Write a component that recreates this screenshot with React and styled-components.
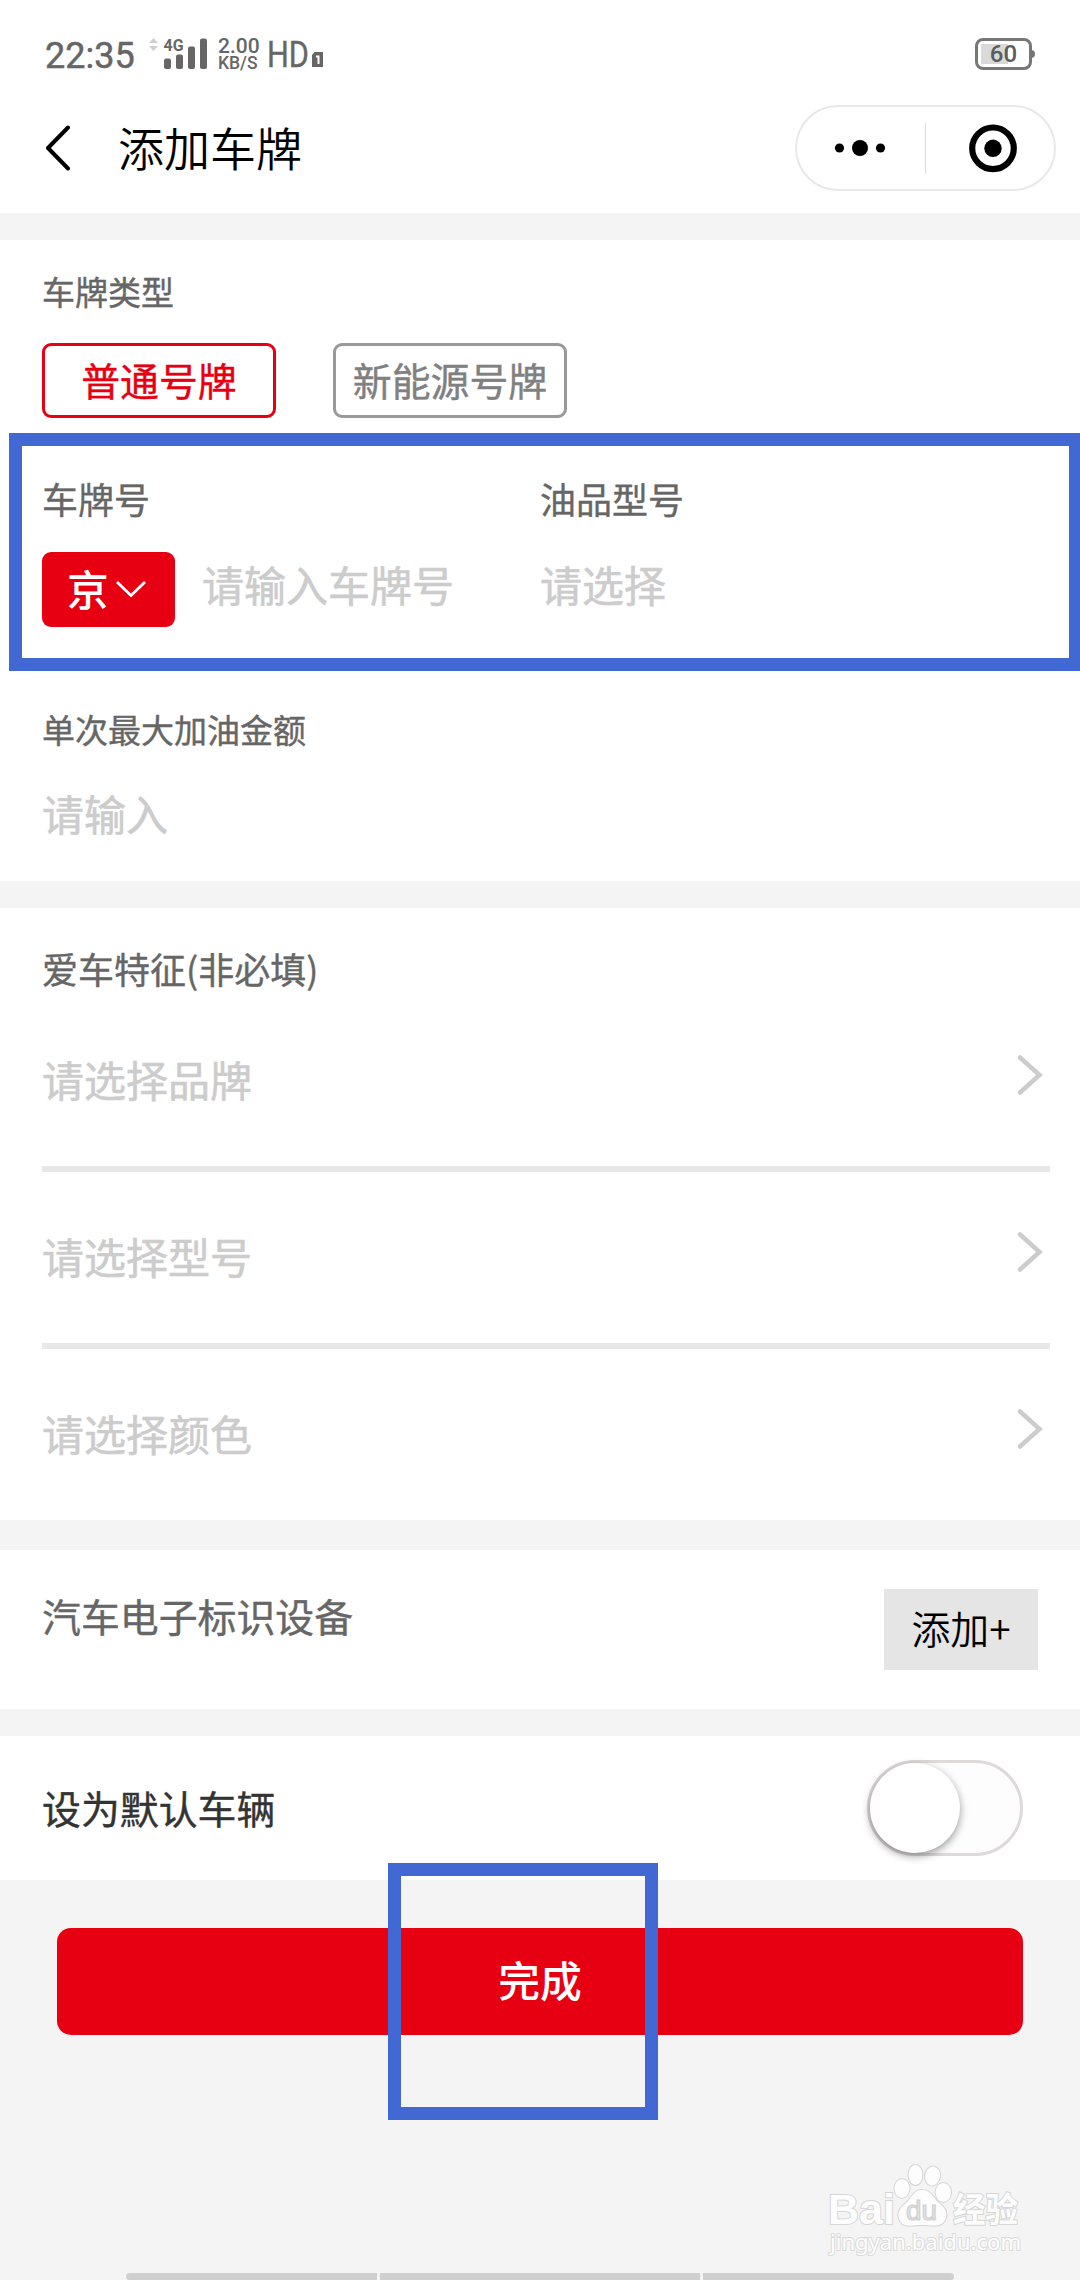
import React, {useState} from 'react';
import styled, {createGlobalStyle} from 'styled-components';

const features = ['请选择品牌', '请选择型号', '请选择颜色'];

function StatusBar() {
  return (
    <Status>
      <Clock>22:35</Clock>
      <Signal width='60' height='34' viewBox='0 0 60 34'>
        <path d='M1 7 L5.5 2 L10 7 Z M1 10 L5.5 15 L10 10 Z' fill='#cfcfcf' />
        <text x='15.5' y='15' textLength='20' lengthAdjust='spacingAndGlyphs'>4G</text>
        <rect x='16' y='22.5' width='7' height='10.5' rx='2' />
        <rect x='28' y='18.5' width='7' height='14.5' rx='2' />
        <rect x='40' y='10.5' width='7' height='22.5' rx='2' />
        <rect x='52' y='2.5' width='7' height='30.5' rx='2' />
      </Signal>
      <Speed>
        <span>2.00</span>
        <small>KB/S</small>
      </Speed>
      <Hd width='58' height='44' viewBox='0 -5 58 44'>
        <text x='0' y='31' textLength='42' lengthAdjust='spacingAndGlyphs'>HD</text>
        <path d='M47.5 16 H56 V31 H45 V19 Z' />
        <path d='M49 20.5 H51.5 V28' stroke='#fff' strokeWidth='2' fill='none' />
      </Hd>
      <Battery>
        <span>60</span>
      </Battery>
    </Status>
  )
}

function Watermark() {
  return (
    <Mark width='200' height='100' viewBox='0 0 200 100'>
      <g className='logo'>
        <text x='6' y='64' fontSize='43' textLength='67' lengthAdjust='spacingAndGlyphs'>Bai</text>
        <ellipse cx='80' cy='28.5' rx='7.5' ry='9.5' />
        <ellipse cx='93.5' cy='15' rx='7' ry='10' />
        <ellipse cx='110.5' cy='16' rx='7.5' ry='9.5' transform='rotate(10 110.5 16)' />
        <ellipse cx='121.3' cy='32.5' rx='7.7' ry='9.5' />
        <path d='M100 30 C109 30 111 38 117 43 C124 48 126 54 123 60 C119 68 110 65 100 65 C90 65 82 68 78 61 C74 53 78 48 84 43 C90 38 91 30 100 30 Z' />
        <text x='131' y='62' className='cn' fontSize='34' textLength='65' lengthAdjust='spacingAndGlyphs'>经验</text>
      </g>
      <text className='du' x='84' y='60' textLength='31' lengthAdjust='spacingAndGlyphs'>du</text>
      <text className='site' x='8' y='90' textLength='191' lengthAdjust='spacingAndGlyphs'>jingyan.baidu.com</text>
    </Mark>
  )
}

function App() {
  const [type, setType] = useState(0);
  const [on, setOn] = useState(false);

  return (
    <>
    <Global />
    <Page>
      <StatusBar />
      <Nav>
        <Back width='26' height='46' viewBox='0 0 26 46'>
          <path d='M23 2.5 L3 23 L23 43.5' />
        </Back>
        <Title>添加车牌</Title>
        <Capsule>
          <svg width='128' height='82' viewBox='0 0 128 82'>
            <circle cx='42.5' cy='41' r='4.6' />
            <circle cx='63' cy='41' r='8' />
            <circle cx='83.5' cy='41' r='4.6' />
          </svg>
          <Split />
          <svg width='128' height='82' viewBox='0 0 128 82'>
            <circle cx='67' cy='41.3' r='20.8' fill='none' stroke='#000' strokeWidth='6.2' />
            <circle cx='67' cy='41.3' r='8.7' />
          </svg>
        </Capsule>
      </Nav>

      <PlateSection>
        <Label size='33px'>车牌类型</Label>
        <Types>
          <TypeButton active={type === 0 ? 1 : 0} onClick={() => setType(0)}>普通号牌</TypeButton>
          <TypeButton active={type === 1 ? 1 : 0} onClick={() => setType(1)}>新能源号牌</TypeButton>
        </Types>
        <Columns>
          <div>
            <Label size='36px'>车牌号</Label>
            <PlateRow>
              <Province>
                京
                <svg width='32' height='18' viewBox='0 0 32 18'>
                  <path d='M2 2 L16 15.5 L30 2' />
                </svg>
              </Province>
              <Hint>请输入车牌号</Hint>
            </PlateRow>
          </div>
          <div>
            <Label size='36px'>油品型号</Label>
            <PlateRow>
              <Hint>请选择</Hint>
            </PlateRow>
          </div>
        </Columns>
        <Label size='33px'>单次最大加油金额</Label>
        <Amount>请输入</Amount>
      </PlateSection>

      <FeatureSection>
        <Label size='36px'>爱车特征(非必填)</Label>
        <div>
          {features.map((f) => (
            <FeatureRow key={f}>
              <Hint>{f}</Hint>
              <svg width='26' height='40' viewBox='0 0 26 40'>
                <path d='M3 2.5 L22.5 20 L3 37.5' />
              </svg>
            </FeatureRow>
          ))}
        </div>
      </FeatureSection>

      <DeviceSection>
        <Label size='38.88px'>汽车电子标识设备</Label>
        <AddButton>添加+</AddButton>
      </DeviceSection>

      <DefaultSection>
        <DefaultText>设为默认车辆</DefaultText>
        <Toggle onClick={() => setOn(!on)} $on={on} />
      </DefaultSection>

      <Submit>完成</Submit>

      <PlateFrame />
      <SubmitFrame />
      <Watermark />
      <HomeBar>
        <i /><i /><i />
      </HomeBar>
    </Page>
    </>
  )
}

export default App

const Global = createGlobalStyle`
body {
    margin: 0;
    background: #f4f4f4;
}
* {
    box-sizing: border-box;
}
button {
    padding: 0;
    border: 0;
    font-family: inherit;
    cursor: pointer;
}
svg {
    display: block;
}
`
const Page = styled.div`
position: relative;
width: 1080px;
height: 2280px;
overflow: hidden;
background: #f4f4f4;
font-family: 'Noto Sans CJK SC', sans-serif;
`
const Status = styled.div`
display: flex;
align-items: flex-start;
height: 90px;
padding: 32px 45px 0;
background: #fff;
color: #666;
font-family: Roboto, sans-serif;
`
const Clock = styled.div`
width: 90px;
font-size: 36px;
-webkit-text-stroke: 0.5px;
line-height: 48px;
`
const Signal = styled.svg`
margin: 4px 0 0 13px;
fill: #666;
font-size: 17px;
font-weight: 700;
`
const Speed = styled.div`
display: flex;
flex-direction: column;
width: 42px;
margin: 7px 0 0 10px;
font-weight: 500;

    span {
        font-size: 21px;
        line-height: 14px;
    }
    small {
        font-size: 17.5px;
        line-height: 20px;
    }
`
const Hd = styled.svg`
margin: -1px 0 0 7px;
fill: #666;
font-size: 36.5px;

    text {
        stroke: #666;
        stroke-width: 0.4;
    }
`
const Battery = styled.div`
position: relative;
width: 57px;
height: 32px;
margin: 6px 3px 0 auto;
border: 3px solid #777;
border-radius: 8px;
background: linear-gradient(#d9d9d9, #d9d9d9) 3px 3px / 27px 20px no-repeat;
color: #5c5c5c;
font-size: 24px;
font-weight: 500;
line-height: 26px;
text-align: center;

    &::after {
        content: '';
        position: absolute;
        right: -6px;
        top: 9px;
        width: 4px;
        height: 8px;
        border-radius: 0 4px 4px 0;
        background: #777;
    }
`
const Nav = styled.div`
display: flex;
align-items: flex-start;
height: 123px;
padding: 15px 24px 0 45px;
background: #fff;
`
const Back = styled.svg`
margin-top: 20px;
fill: none;
stroke: #000;
stroke-width: 4;
stroke-linecap: round;
stroke-linejoin: round;
`
const Title = styled.div`
margin: 13px 0 0 47px;
font-size: 46px;
font-weight: 350;
line-height: 56px;
`
const Capsule = styled.div`
display: flex;
align-items: center;
width: 261px;
height: 86px;
margin-left: auto;
border: 2px solid #e8e8e8;
border-radius: 43px;
`
const Split = styled.div`
width: 1px;
height: 51px;
background: #ddd;
`
const Section = styled.div`
padding: 0 42px;
background: #fff;
`
const Label = styled.div`
color: #666;
font-size: ${({size}) => size};
-webkit-text-stroke: 0.4px;
line-height: 44px;
`
const Hint = styled.div`
color: #ccc;
font-size: 42px;
-webkit-text-stroke: 0.6px;
line-height: 50px;
`
const PlateSection = styled(Section)`
height: 641px;
margin-top: 27px;
padding-top: 29px;
`
const Types = styled.div`
display: flex;
gap: 57px;
margin-top: 30px;
`
const TypeButton = styled.button`
width: 234px;
height: 75px;
border: 3px solid ${({active}) => (active ? '#e60012' : '#999')};
border-radius: 9px;
background: #fff;
color: ${({active}) => (active ? '#e60012' : '#808080')};
font-size: 38.88px;
-webkit-text-stroke: 0.4px;
line-height: 65px;
padding-bottom: 3px;
`
const Columns = styled.div`
display: grid;
grid-template-columns: 498px 1fr;
margin: 58px 0 80px;
`
const PlateRow = styled.div`
display: flex;
align-items: center;
gap: 27px;
height: 75px;
margin-top: 32px;

    ${Hint} {
        margin-bottom: 11px;
    }
`
const Province = styled.button`
display: flex;
align-items: center;
gap: 6px;
width: 133px;
height: 75px;
padding: 0 0 4px 25px;
border-radius: 9px;
background: #e60012;
color: #fff;
font-size: 41.76px;
font-weight: 500;
line-height: 70px;

    svg {
        margin-top: 3px;
        fill: none;
        stroke: #fff;
        stroke-width: 2.8;
    }
`
const Amount = styled(Hint)`
margin-top: 37px;
`
const FeatureSection = styled(Section)`
height: 612px;
margin-top: 27px;
padding: 38px 30px 0 42px;
overflow: hidden;

    > div:last-child {
        margin-top: 5px;
    }
`
const FeatureRow = styled.div`
display: flex;
justify-content: space-between;
height: 177px;
padding: 59px 7px 0 0;
border-bottom: 6px solid #e8e8e8;

    &:last-child {
        border-bottom: 0;
    }

    svg {
        margin-top: 1px;
        fill: none;
        stroke: #ccc;
        stroke-width: 4.5;
        stroke-linecap: round;
    }
`
const DeviceSection = styled(Section)`
display: flex;
justify-content: space-between;
align-items: flex-start;
height: 159px;
margin-top: 30px;
padding-top: 39px;

    ${Label} {
        margin-top: 4px;
    }
`
const AddButton = styled.button`
width: 154px;
height: 81px;
padding-bottom: 4px;
background: #e5e5e5;
color: #000;
font-size: 38.88px;
font-weight: 350;
line-height: 77px;
`
const DefaultSection = styled(Section)`
display: flex;
justify-content: space-between;
align-items: center;
height: 144px;
margin-top: 27px;
padding-right: 57px;
`
const DefaultText = styled.div`
color: #333;
font-size: 38.88px;
-webkit-text-stroke: 0.4px;
line-height: 50px;
margin-bottom: 2px;
`
const Toggle = styled.button`
display: flex;
justify-content: ${({$on}) => ($on ? 'flex-end' : 'flex-start')};
width: 156px;
height: 96px;
border: 3px solid #dfdada;
border-radius: 48px;
background: ${({$on}) => ($on ? '#e60012' : '#fdfdfd')};

    &::before {
        content: '';
        width: 90px;
        height: 90px;
        border-radius: 50%;
        background: #fff;
        box-shadow: 0 3px 9px rgba(0, 0, 0, 0.4);
    }
`
const Submit = styled.button`
display: block;
width: 966px;
height: 107px;
margin: 48px 57px 0;
padding-bottom: 4px;
border-radius: 14px;
background: #e60012;
color: #fff;
font-size: 41.76px;
font-weight: 500;
line-height: 103px;
`
const Frame = styled.div`
position: absolute;
border: 13px solid #4268d3;
pointer-events: none;
`
const PlateFrame = styled(Frame)`
left: 9px;
top: 433px;
width: 1073px;
height: 238px;
`
const SubmitFrame = styled(Frame)`
left: 388px;
top: 1863px;
width: 270px;
height: 257px;
`
const Mark = styled.svg`
position: absolute;
left: 822px;
top: 2160px;

    .logo {
        fill: #fdfdfd;
        stroke: #d6d6d6;
        stroke-width: 2;
        paint-order: stroke;
        font-family: 'Liberation Sans', sans-serif;
        font-weight: 700;
    }
    .cn {
        font-family: 'Noto Sans CJK SC', sans-serif;
    }
    .du {
        fill: #e6e6e6;
        stroke: #cfcfcf;
        stroke-width: 1.2;
        font-family: 'Liberation Sans', sans-serif;
        font-size: 28px;
    }
    .site {
        fill: #fdfdfd;
        stroke: #dadada;
        stroke-width: 2;
        paint-order: stroke;
        font-family: 'Noto Sans', sans-serif;
        font-size: 22px;
    }
`
const HomeBar = styled.div`
position: absolute;
left: 126px;
bottom: 0;
display: grid;
grid-template-columns: 251px 320px 251px;
gap: 3px;
width: 828px;
height: 7px;
border-radius: 4px;
overflow: hidden;

    i {
        background: #cfcfcf;
    }
`
